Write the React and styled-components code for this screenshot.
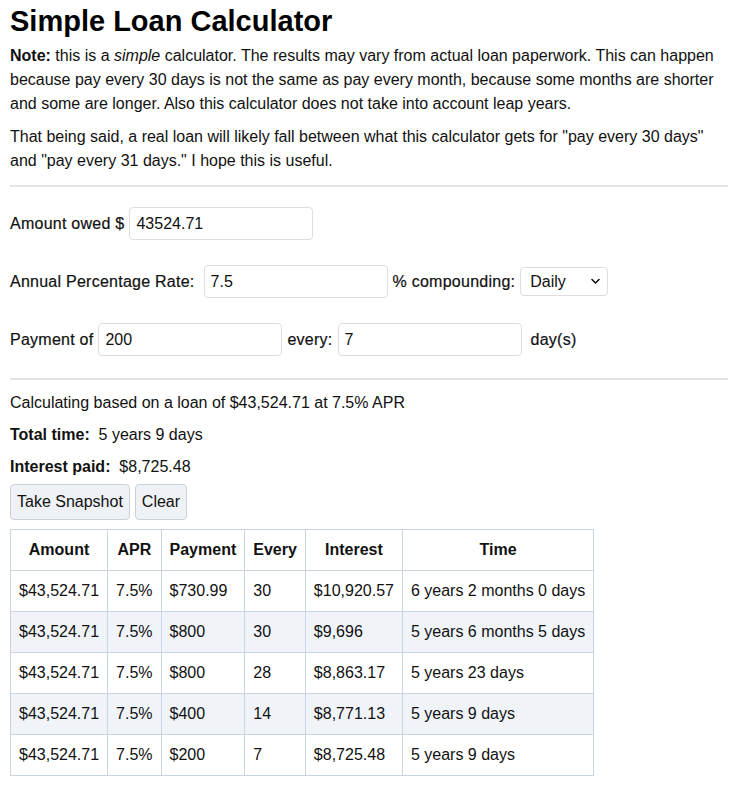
import React from "react";
import styled, { createGlobalStyle } from "styled-components";

const Global = createGlobalStyle`
  html, body { margin: 0; padding: 0; background: #fff; }
  body {
    font-family: "Liberation Sans", Arial, Helvetica, sans-serif;
    font-size: 16px;
    line-height: 24px;
    color: #111;
  }
  * { box-sizing: border-box; }
`;

const Page = styled.main`
  width: 718px;
  margin: 0 0 0 10px;
  padding-bottom: 10px;
`;

const Title = styled.h1`
  font-size: 29px;
  line-height: 34px;
  font-weight: 700;
  margin: 4px 0 6px;
  color: #000;
`;

const Para = styled.p`
  margin: 0 0 9px;
`;

const Rule = styled.hr`
  border: 0;
  height: 2px;
  background: #e4e4e7;
  margin: ${(p) => p.$top}px 0 0;
`;

const Form = styled.section`
  display: flex;
  flex-direction: column;
  gap: 25px;
  padding: 20px 0 22px;
`;

const Row = styled.div`
  display: flex;
  align-items: center;
  gap: 5px;
  height: 33px;
`;

const Label = styled.span`
  white-space: pre;
  letter-spacing: 0.25px;
  -webkit-text-stroke: 0.2px #111;
  margin-right: ${(p) => p.$extra || 0}px;
`;

const Input = styled.input`
  width: 184px;
  height: 33px;
  border: 1px solid #dedee0;
  border-radius: 4px;
  padding: 0 6px;
  font: inherit;
  color: #111;
  background: #fff;
  margin-right: ${(p) => p.$extra || 0}px;
`;

const SelectWrap = styled.div`
  position: relative;
  width: 88px;
  height: 29px;
`;

const Select = styled.select`
  appearance: none;
  -webkit-appearance: none;
  width: 100%;
  height: 100%;
  border: 1px solid #dedee0;
  border-radius: 4px;
  background: #fff;
  font: inherit;
  color: #111;
  padding: 0 24px 0 9px;
`;

const Chevron = styled.svg`
  position: absolute;
  right: 8px;
  top: 11px;
  width: 9px;
  height: 7px;
  pointer-events: none;
`;

const Results = styled.section`
  padding-top: 11px;
  display: flex;
  flex-direction: column;
  align-items: flex-start;
  gap: 8px;
`;

const Line = styled.div`
  white-space: pre;
`;

const Buttons = styled.div`
  display: flex;
  gap: 5px;
  margin-top: -3px;
`;

const Button = styled.button`
  height: 36px;
  padding: 0 6px;
  font: inherit;
  color: #111;
  background: #eef1f5;
  border: 1px solid #ccd1d8;
  border-radius: 4px;
`;

const Table = styled.table`
  border-collapse: collapse;
  margin-top: 1px;
`;

const Th = styled.th`
  border: 1px solid #cbd5e1;
  padding: 8px 8px;
  font-weight: 700;
  text-align: center;
  white-space: nowrap;
`;

const Tr = styled.tr`
  background: ${(p) => (p.$striped ? "#f0f4f9" : "#fff")};
`;

const Td = styled.td`
  border: 1px solid #cbd5e1;
  padding: 8px 8px;
  white-space: nowrap;
`;

const rows = [
  ["$43,524.71", "7.5%", "$730.99", "30", "$10,920.57", "6 years 2 months 0 days"],
  ["$43,524.71", "7.5%", "$800", "30", "$9,696", "5 years 6 months 5 days"],
  ["$43,524.71", "7.5%", "$800", "28", "$8,863.17", "5 years 23 days"],
  ["$43,524.71", "7.5%", "$400", "14", "$8,771.13", "5 years 9 days"],
  ["$43,524.71", "7.5%", "$200", "7", "$8,725.48", "5 years 9 days"],
];

export default function App() {
  return (
    <>
      <Global />
      <Page>
        <Title>Simple Loan Calculator</Title>
        <Para>
          <b>Note:</b> this is a <i>simple</i> calculator. The results may vary from actual loan
          paperwork. This can happen because pay every 30 days is not the same as pay every
          month, because some months are shorter and some are longer. Also this calculator does
          not take into account leap years.
        </Para>
        <Para>
          That being said, a real loan will likely fall between what this calculator gets for
          "pay every 30 days" and "pay every 31 days." I hope this is useful.
        </Para>
        <Rule $top={12} />
        <Form>
          <Row>
            <Label>Amount owed $</Label>
            <Input defaultValue="43524.71" />
          </Row>
          <Row>
            <Label $extra={4}>Annual Percentage Rate:</Label>
            <Input defaultValue="7.5" />
            <Label>% compounding:</Label>
            <SelectWrap>
              <Select defaultValue="Daily">
                <option>Daily</option>
                <option>Monthly</option>
              </Select>
              <Chevron viewBox="0 0 9 7">
                <path d="M1 1.5 L4.5 5 L8 1.5" fill="none" stroke="#111" strokeWidth="1.6" strokeLinecap="round" strokeLinejoin="round" />
              </Chevron>
            </SelectWrap>
          </Row>
          <Row>
            <Label>Payment of</Label>
            <Input defaultValue="200" />
            <Label>every:</Label>
            <Input defaultValue="7" $extra={4} />
            <Label>day(s)</Label>
          </Row>
        </Form>
        <Rule $top={0} />
        <Results>
          <Line>Calculating based on a loan of $43,524.71 at 7.5% APR</Line>
          <Line>
            <b>Total time:</b>  5 years 9 days
          </Line>
          <Line>
            <b>Interest paid:</b>  $8,725.48
          </Line>
          <Buttons>
            <Button>Take Snapshot</Button>
            <Button>Clear</Button>
          </Buttons>
          <Table>
            <thead>
              <tr>
                <Th>Amount</Th>
                <Th>APR</Th>
                <Th>Payment</Th>
                <Th>Every</Th>
                <Th>Interest</Th>
                <Th>Time</Th>
              </tr>
            </thead>
            <tbody>
              {rows.map((r, i) => (
                <Tr key={i} $striped={i % 2 === 1}>
                  {r.map((c, j) => (
                    <Td key={j}>{c}</Td>
                  ))}
                </Tr>
              ))}
            </tbody>
          </Table>
        </Results>
      </Page>
    </>
  );
}
